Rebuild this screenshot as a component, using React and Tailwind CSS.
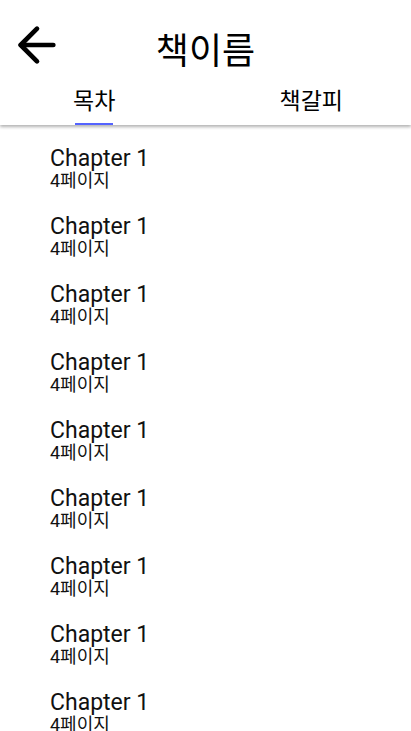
import { ArrowLeft } from 'lucide-react';

const chapters = Array.from({ length: 9 }, () => ({ title: 'Chapter 1', page: '4페이지' }));

const App = () => {
  return (
    <div
      className="h-[731px] overflow-hidden bg-white text-black"
      style={{ fontFamily: 'Roboto, "Noto Sans CJK KR", sans-serif' }}
    >
      {/* Header */}
      <div className="relative z-10 bg-white shadow-[0_2px_3px_rgba(0,0,0,0.3)]">
        <div className="relative flex h-[80px] items-center justify-center pt-[24px]">
          <button className="absolute left-[9px] top-[17px]">
            <ArrowLeft size={56} strokeWidth={2} />
          </button>
          <h1 className="text-[36px] leading-[44px]">책이름</h1>
        </div>

        {/* Tabs */}
        <div className="flex h-[45px]">
          <div className="ml-[73px] flex flex-col items-center pt-[8px]">
            <span className="text-[23px] leading-[28px]">목차</span>
            <div className="mt-[7px] h-[2px] w-[38px] bg-[#5463ff]" />
          </div>
          <div className="ml-auto mr-[68px] flex flex-col items-center pt-[8px]">
            <span className="text-[23px] leading-[28px]">책갈피</span>
            <div className="mt-[7px] h-[2px] w-[38px] bg-transparent" />
          </div>
        </div>
      </div>

      {/* Chapter list */}
      <ul className="pt-[10px]">
        {chapters.map((c, i) => (
          <li key={i} className="px-[50px] pt-[12px] pb-[13px] text-[#111]">
            <div className="text-[23px] leading-[24px]">{c.title}</div>
            <div className="text-[18px] leading-[19px]">{c.page}</div>
          </li>
        ))}
      </ul>
    </div>
  );
};

export default App;
